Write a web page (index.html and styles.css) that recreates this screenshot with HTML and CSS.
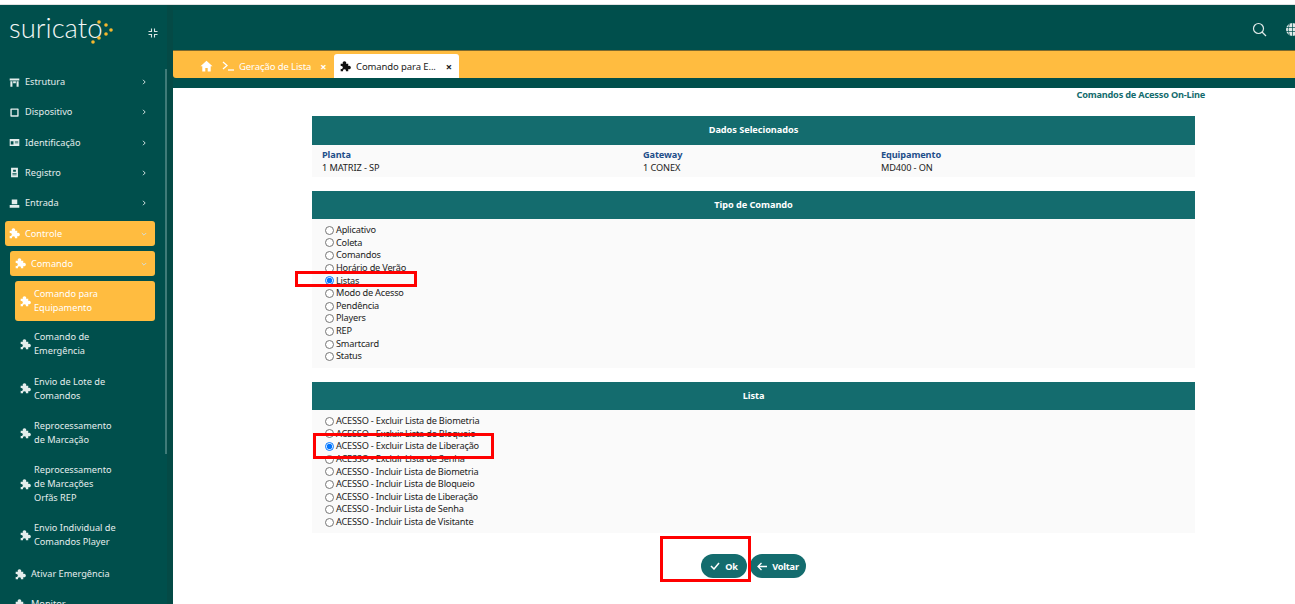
FILE: index.html
```html
<!DOCTYPE html>
<html lang="en">
<head>
  <meta charset="UTF-8" />
  <title>Suricato</title>
  <link rel="stylesheet" href="styles.css">
</head>
<body>
  <svg class="defs" width="0" height="0">
    <symbol id="puzzle" viewBox="0 0 16 16"><path d="M1 4h3.200a2.600 2.600 0 1 1 4.600 0H12v3.200a2.600 2.600 0 1 1 0 4.600V15H8.600a2.200 2.200 0 1 0-4.200 0H1v-3.600a2.200 2.200 0 1 0 0-4z" fill="currentColor"/></symbol>
    <symbol id="chev-r" viewBox="0 0 8 8"><path d="M3 1.800 5.200 4 3 6.200" fill="none" stroke="currentColor" stroke-width="1"/></symbol>
    <symbol id="chev-d" viewBox="0 0 8 8"><path d="M1.800 3 4 5.200 6.200 3" fill="none" stroke="currentColor" stroke-width="1"/></symbol>
  </svg>

  <div class="top-line"></div>
  <div class="shell">
    <aside class="sidebar">
      <div class="brand">
        <span class="logo">suricato</span>
        <svg class="logo-dots" width="24" height="26" viewBox="0 0 24 26">
          <g fill="#f5b82e"><circle cx="8" cy="3" r="1.800"/><circle cx="15" cy="6" r="1.800"/><circle cx="20" cy="11" r="1.800"/><circle cx="15" cy="15" r="1.800"/><circle cx="8" cy="19" r="1.800"/><circle cx="2" cy="23" r="1.800"/></g>
        </svg>
        <svg class="collapse" width="10" height="10" viewBox="0 0 10 10"><path d="M.500 3.500h3v-3M9.500 3.500h-3v-3M.500 6.500h3v3M9.500 6.500h-3v3" fill="none" stroke="#d8e4e3" stroke-width="1.100"/></svg>
      </div>
      <nav class="menu">
        <a class="item"><svg class="ico" viewBox="0 0 16 16"><path d="M1 2h14v3H1zM2 6h3v8H2zM11 6h3v8h-3zM6 6h4v3H6z" fill="currentColor"/></svg><span class="label">Estrutura</span><svg class="chev"><use href="#chev-r"/></svg></a>
        <a class="item"><svg class="ico" viewBox="0 0 16 16"><path d="M3 2h10a1 1 0 0 1 1 1v10a1 1 0 0 1-1 1H3a1 1 0 0 1-1-1V3a1 1 0 0 1 1-1zm1 2v8h8V4z" fill="currentColor" fill-rule="evenodd"/></svg><span class="label">Dispositivo</span><svg class="chev"><use href="#chev-r"/></svg></a>
        <a class="item"><svg class="ico" viewBox="0 0 16 16"><path d="M1 3h14v10H1zm1.500 3v5h4V6zm6 0v1h5V6zm0 2v1h5V8z" fill="currentColor" fill-rule="evenodd"/></svg><span class="label">Identificação</span><svg class="chev"><use href="#chev-r"/></svg></a>
        <a class="item"><svg class="ico" viewBox="0 0 16 16"><path d="M3 1h10v14H3zm3 3v3h4V4zm-1 5v1h6V9zm0 2v1h6v-1z" fill="currentColor" fill-rule="evenodd"/></svg><span class="label">Registro</span><svg class="chev"><use href="#chev-r"/></svg></a>
        <a class="item"><svg class="ico" viewBox="0 0 16 16"><path d="M4 2h8v7H4zM1 10h14v4H1z" fill="currentColor"/></svg><span class="label">Entrada</span><svg class="chev"><use href="#chev-r"/></svg></a>
        <a class="item pill lvl1"><svg class="ico"><use href="#puzzle"/></svg><span class="label">Controle</span><svg class="chev"><use href="#chev-d"/></svg></a>
        <a class="item pill lvl2"><svg class="ico"><use href="#puzzle"/></svg><span class="label">Comando</span><svg class="chev"><use href="#chev-d"/></svg></a>
        <a class="item pill lvl3"><svg class="ico"><use href="#puzzle"/></svg><span class="label">Comando para<br>Equipamento</span></a>
        <a class="item lvl3"><svg class="ico"><use href="#puzzle"/></svg><span class="label">Comando de<br>Emergência</span></a>
        <a class="item lvl3"><svg class="ico"><use href="#puzzle"/></svg><span class="label">Envio de Lote de<br>Comandos</span></a>
        <a class="item lvl3"><svg class="ico"><use href="#puzzle"/></svg><span class="label">Reprocessamento<br>de Marcação</span></a>
        <a class="item lvl3 tall"><svg class="ico"><use href="#puzzle"/></svg><span class="label">Reprocessamento<br>de Marcações<br>Orfãs REP</span></a>
        <a class="item lvl3"><svg class="ico"><use href="#puzzle"/></svg><span class="label">Envio Individual de<br>Comandos Player</span></a>
        <a class="item lvl2"><svg class="ico"><use href="#puzzle"/></svg><span class="label">Ativar Emergência</span></a>
        <a class="item lvl2"><svg class="ico"><use href="#puzzle"/></svg><span class="label">Monitor</span></a>
      </nav>
      <div class="scrollbar"></div>
    </aside>

    <main class="main">
      <header class="topbar">
        <svg class="top-ico" width="15" height="15" viewBox="0 0 15 15"><circle cx="6.500" cy="6.500" r="5" fill="none" stroke="#dfe9e8" stroke-width="1.200"/><path d="m10 10 4 4" stroke="#dfe9e8" stroke-width="1.200"/></svg>
        <svg class="top-ico globe" width="15" height="15" viewBox="0 0 15 15"><circle cx="7.500" cy="7.500" r="6.500" fill="#dfe9e8"/><path d="M1 5.500h13M1 9.500h13M7.500 1v13M4.500 2c-1.500 3.500-1.500 7.500 0 11M10.500 2c1.500 3.500 1.500 7.500 0 11" fill="none" stroke="#004f4c" stroke-width=".7"/></svg>
      </header>
      <div class="tabs">
        <svg class="tab-home" width="13" height="12" viewBox="0 0 13 12"><path d="M6.500 .8 .5 6.300h1.800V11.500h3V8h2.400v3.500h3V6.300h1.800z" fill="#fff"/></svg>
        <div class="tab">
          <svg class="tab-term" width="12" height="10" viewBox="0 0 12 10"><path d="M1 1l4 3.500L1 8" fill="none" stroke="#fff" stroke-width="1.300"/><path d="M6 9h6" stroke="#fff" stroke-width="1.300"/></svg>
          <span>Geração de Lista</span><b class="close">×</b>
        </div>
        <div class="tab active">
          <svg class="tab-puzzle"><use href="#puzzle"/></svg>
          <span>Comando para E...</span><b class="close">×</b>
        </div>
      </div>
      <div class="strip"></div>
      <section class="content">
        <div class="page-title">Comandos de Acesso On-Line</div>

        <div class="panel">
          <h3 class="panel-head">Dados Selecionados</h3>
          <div class="panel-body summary">
            <div class="col c1"><strong>Planta</strong><span>1 MATRIZ - SP</span></div>
            <div class="col c2"><strong>Gateway</strong><span>1 CONEX</span></div>
            <div class="col"><strong>Equipamento</strong><span>MD400 - ON</span></div>
          </div>
        </div>

        <div class="panel">
          <h3 class="panel-head">Tipo de Comando</h3>
          <div class="panel-body radios tipo">
            <label><input type="radio" name="tipo">Aplicativo</label>
            <label><input type="radio" name="tipo">Coleta</label>
            <label><input type="radio" name="tipo">Comandos</label>
            <label><input type="radio" name="tipo">Horário de Verão</label>
            <label><input type="radio" name="tipo" checked>Listas</label>
            <label><input type="radio" name="tipo">Modo de Acesso</label>
            <label><input type="radio" name="tipo">Pendência</label>
            <label><input type="radio" name="tipo">Players</label>
            <label><input type="radio" name="tipo">REP</label>
            <label><input type="radio" name="tipo">Smartcard</label>
            <label><input type="radio" name="tipo">Status</label>
          </div>
        </div>

        <div class="panel">
          <h3 class="panel-head">Lista</h3>
          <div class="panel-body radios lista">
            <label><input type="radio" name="lista">ACESSO - Excluir Lista de Biometria</label>
            <label><input type="radio" name="lista">ACESSO - Excluir Lista de Bloqueio</label>
            <label><input type="radio" name="lista" checked>ACESSO - Excluir Lista de Liberação</label>
            <label><input type="radio" name="lista">ACESSO - Excluir Lista de Senha</label>
            <label><input type="radio" name="lista">ACESSO - Incluir Lista de Biometria</label>
            <label><input type="radio" name="lista">ACESSO - Incluir Lista de Bloqueio</label>
            <label><input type="radio" name="lista">ACESSO - Incluir Lista de Liberação</label>
            <label><input type="radio" name="lista">ACESSO - Incluir Lista de Senha</label>
            <label><input type="radio" name="lista">ACESSO - Incluir Lista de Visitante</label>
          </div>
        </div>

        <div class="actions">
          <button class="btn ok"><svg width="10" height="8" viewBox="0 0 10 8"><path d="M1 4l3 3 5-6" fill="none" stroke="#fff" stroke-width="1.500"/></svg>Ok</button>
          <button class="btn back"><svg width="10" height="9" viewBox="0 0 10 9"><path d="M4.500 1 1 4.500 4.500 8M1 4.500h9" fill="none" stroke="#fff" stroke-width="1.300"/></svg>Voltar</button>
        </div>
      </section>
    </main>
  </div>

  <!-- red annotations drawn over the page -->
  <div class="mark mark-listas"></div>
  <div class="mark mark-liberacao"></div>
  <div class="mark mark-ok"></div>
</body>
</html>
```

FILE: styles.css
```css
html, body {
  height: 100%;
}

body {
  margin: 0;
  overflow: hidden;
  position: relative;
  background: #fff;
  font-family: "Noto Sans", "Open Sans", sans-serif;
  font-size: 9.2px;
  color: #222;
}

.defs {
  position: absolute;
}

.top-line {
  height: 5px;
  background: #fff;
  border-bottom: 1px solid #e2e2e2;
  box-sizing: border-box;
}

.shell {
  display: flex;
  height: 599px;
  background: #044a46;
}

/* sidebar */
.sidebar {
  width: 173px;
  flex: none;
  position: relative;
  overflow: hidden;
  background: #004f4c;
  border-right: 6px solid #044a46;
  box-sizing: border-box;
}

.brand {
  height: 46px;
  display: flex;
  align-items: center;
  padding-left: 9px;
  position: relative;
}

.logo {
  font-family: Lato, "Open Sans", sans-serif;
  font-weight: 300;
  font-size: 27.500px;
  line-height: 30px;
  color: #f2f6f5;
}

.logo-dots {
  position: absolute;
  left: 91px;
  top: 14px;
}

.collapse {
  position: absolute;
  left: 148px;
  top: 23px;
}

.scrollbar {
  position: absolute;
  top: 64px;
  right: 0;
  width: 2px;
  height: 385px;
  background: #3f7b78;
}

.menu {
  display: flex;
  flex-direction: column;
  padding-top: 16px;
}

.item {
  display: flex;
  align-items: center;
  min-height: 30.250px;
  margin-right: 12px;
  padding-left: 9px;
  color: #e4edec;
  line-height: 14px;
  box-sizing: border-box;
}

.ico {
  width: 11px;
  height: 11px;
  flex: none;
  margin-right: 5px;
}

.label {
  flex: 1;
}

.chev {
  width: 8px;
  height: 8px;
  flex: none;
  margin-right: 7px;
  color: #d0dedd;
}

.pill {
  background: #ffbc40;
  border-radius: 3px;
  color: #fff;
  min-height: 25px;
  margin-bottom: 5px;
}

.lvl1 {
  margin-left: 5px;
  padding-left: 4px;
  margin-top: 3px;
}

.lvl2 {
  margin-left: 10px;
  padding-left: 5px;
}

.lvl3 {
  margin-left: 15px;
  padding: 8.200px 0 8.200px 5px;
}

.lvl3 .ico {
  margin-right: 3px;
}

.lvl3.pill {
  padding-top: 6px;
  padding-bottom: 6px;
  min-height: 40px;
  margin-bottom: 1px;
}

.lvl3.tall {
  margin-top: -0.500px;
}

.lvl3 + .lvl2 {
  min-height: 30px;
  margin-top: 1.500px;
}

/* main area */
.main {
  flex: 1;
  min-width: 0;
  display: flex;
  flex-direction: column;
}

.topbar {
  height: 45px;
  display: flex;
  align-items: center;
  gap: 18px;
  padding-left: 1079px;
  flex: none;
  overflow: hidden;
  background: #004f4c;
  border-top: 5px solid #024c48;
  box-sizing: border-box;
}

.top-ico {
  flex: none;
  margin-top: -2px;
}

.tabs {
  height: 28px;
  flex: none;
  display: flex;
  align-items: flex-end;
  padding-left: 27px;
  background: #ffbc40;
  border-top: 1px solid #7d6a2e;
  box-sizing: border-box;
  border-bottom-left-radius: 3px;
}

.tab-home {
  margin-bottom: 6px;
  margin-right: 9px;
}

.tab {
  width: 112px;
  height: 24px;
  flex: none;
  display: flex;
  align-items: center;
  color: #fff;
  font-size: 9.500px;
  letter-spacing: -0.1px;
  white-space: nowrap;
  box-sizing: border-box;
}

.tab-term {
  margin-right: 5px;
}

.close {
  margin-left: 9px;
  font-size: 11px;
  font-weight: 700;
}

.tab.active {
  width: 125px;
  background: #fff;
  color: #222;
  border-radius: 3px 3px 0 0;
  padding-left: 6px;
}

.tab-puzzle {
  width: 11px;
  height: 11px;
  margin-right: 5px;
  color: #111;
}

.tab.active .close {
  margin-left: 10px;
}

.strip {
  height: 10px;
  flex: none;
  background: #004f4c;
}

.content {
  flex: 1;
  background: #fff;
  padding: 0 100px 0 139px;
}

.page-title {
  height: 28px;
  margin-right: -10px;
  text-align: right;
  font-weight: 700;
  line-height: 14px;
  letter-spacing: -0.2px;
  color: #146c6e;
}

.panel {
  margin-bottom: 14px;
}

.panel-head {
  margin: 0;
  height: 28px;
  background: #146c6e;
  color: #fff;
  font-size: 9.200px;
  font-weight: 700;
  line-height: 28px;
  letter-spacing: -0.05px;
  text-align: center;
}

.page-title + .panel .panel-head {
  height: 29px;
}

.panel-body {
  background: #fafafa;
  letter-spacing: -0.2px;
}

.summary {
  display: flex;
  height: 32px;
  padding: 4px 0 0 10px;
  box-sizing: border-box;
  line-height: 12.500px;
  letter-spacing: -0.1px;
}

.col {
  display: flex;
  flex-direction: column;
}

.col strong {
  color: #1f4f8a;
  font-weight: 700;
}

.c1 {
  width: 321px;
}

.c2 {
  width: 238px;
}

.radios {
  display: flex;
  flex-direction: column;
  padding: 5px 0 0 13px;
  box-sizing: border-box;
}

.radios label {
  display: flex;
  align-items: center;
  height: 12.650px;
  line-height: 12.650px;
  white-space: nowrap;
}

.radios input {
  width: 9px;
  height: 9px;
  margin: 0 2px 0 0;
  accent-color: #0075ff;
}

.tipo {
  height: 149px;
}

.lista {
  height: 123px;
  padding-top: 5px;
}

.actions {
  display: flex;
  justify-content: flex-start;
  gap: 3px;
  padding: 7px 0 0 389px;
}

.btn {
  height: 24px;
  border: 0;
  border-radius: 12px;
  background: #146c6e;
  color: #fff;
  font: 700 9.200px "Noto Sans", "Open Sans", sans-serif;
  letter-spacing: -0.2px;
  display: flex;
  align-items: center;
  justify-content: center;
  gap: 5px;
  padding: 0;
}

.ok {
  width: 46px;
}

.back {
  width: 56px;
}

/* annotations */
.mark {
  position: absolute;
  border: 3px solid #f00;
  box-sizing: border-box;
}

.mark-listas {
  left: 295px;
  top: 271px;
  width: 122px;
  height: 16px;
}

.mark-liberacao {
  left: 313px;
  top: 433px;
  width: 181px;
  height: 26px;
}

.mark-ok {
  left: 660px;
  top: 536px;
  width: 91px;
  height: 46px;
}
```
